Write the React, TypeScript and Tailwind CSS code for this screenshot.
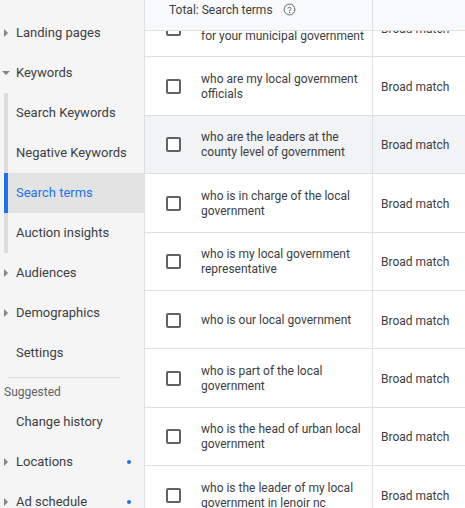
import React from "react";

type NavItem = {
  label: string;
  arrow?: "right" | "down";
  active?: boolean;
  dot?: boolean;
};

const navTop: NavItem[] = [
  { label: "Landing pages", arrow: "right" },
  { label: "Keywords", arrow: "down" },
];

const navSub: NavItem[] = [
  { label: "Search Keywords" },
  { label: "Negative Keywords" },
  { label: "Search terms", active: true },
  { label: "Auction insights" },
];

const navBottom: NavItem[] = [
  { label: "Audiences", arrow: "right" },
  { label: "Demographics", arrow: "right" },
  { label: "Settings" },
];

const suggested: NavItem[] = [
  { label: "Change history" },
  { label: "Locations", arrow: "right", dot: true },
  { label: "Ad schedule", arrow: "right", dot: true },
];

const rows: { term: string[]; hover?: boolean }[] = [
  { term: ["who is the representative", "for your municipal government"] },
  { term: ["who are my local government", "officials"] },
  { term: ["who are the leaders at the", "county level of government"], hover: true },
  { term: ["who is in charge of the local", "government"] },
  { term: ["who is my local government", "representative"] },
  { term: ["who is our local government"] },
  { term: ["who is part of the local", "government"] },
  { term: ["who is the head of urban local", "government"] },
  { term: ["who is the leader of my local", "government in lenoir nc"] },
];

const Arrow = ({ dir }: { dir: "right" | "down" }) =>
  dir === "right" ? (
    <svg width="4" height="8" viewBox="0 0 4 8" className="absolute left-[4px] top-1/2 -translate-y-1/2">
      <path d="M0 0 L4 4 L0 8 Z" fill="#80868b" />
    </svg>
  ) : (
    <svg width="8" height="4" viewBox="0 0 8 4" className="absolute left-[2px] top-1/2 -translate-y-1/2">
      <path d="M0 0 L8 0 L4 4 Z" fill="#80868b" />
    </svg>
  );

const NavRow = ({ item }: { item: NavItem }) => (
  <div className="relative flex h-10 items-center pl-4 pr-3 text-[13px] text-[#3c4043]">
    {item.arrow && <Arrow dir={item.arrow} />}
    <span className="flex-1 whitespace-nowrap">{item.label}</span>
    {item.dot && <span className="mr-[1px] h-[4px] w-[4px] rounded-full bg-[#1a73e8]" />}
  </div>
);

const SubRow = ({ item }: { item: NavItem }) => (
  <div className="flex h-10 pl-[4px]">
    <div className={`w-[4px] ${item.active ? "bg-[#1a73e8]" : "bg-[#dadce0]"}`} />
    <div
      className={`flex flex-1 items-center whitespace-nowrap pl-[8px] text-[13px] ${
        item.active ? "bg-[#e3e3e3] text-[#1a73e8]" : "text-[#3c4043]"
      }`}
    >
      {item.label}
    </div>
  </div>
);

const Checkbox = () => (
  <div className="h-[15px] w-[15px] rounded-[2px] border-2 border-[#5f6368] bg-white" />
);

export default function App() {
  return (
    <div
      className="flex h-[508px] w-[465px] overflow-hidden bg-white"
      style={{ fontFamily: "Roboto, 'Liberation Sans', sans-serif" }}
    >
      {/* Sidebar */}
      <div className="w-[145px] shrink-0 border-r border-[#e0e0e0] bg-[#f5f5f5] pt-[13px]">
        {navTop.map((n) => (
          <NavRow key={n.label} item={n} />
        ))}
        {navSub.map((n) => (
          <SubRow key={n.label} item={n} />
        ))}
        {navBottom.map((n) => (
          <NavRow key={n.label} item={n} />
        ))}
        <div className="ml-[8px] mr-[24px] mt-[4px] border-t border-[#dadce0]" />
        <div className="h-[24px] pl-[4px] pt-[7px] text-[12px] leading-[14px] text-[#5f6368]">
          Suggested
        </div>
        {suggested.map((n) => (
          <NavRow key={n.label} item={n} />
        ))}
      </div>

      {/* Table */}
      <div className="flex-1 text-[12px] text-[#3c4043]">
        <div className="relative z-10 flex h-[31px] border-b border-[#e0e0e0] bg-[#f8f9fa]">
          <div className="flex w-[228px] items-start gap-[10px] border-r border-[#e0e0e0] pl-[24px] pt-[3px]">
            <span className="leading-[14px]">Total: Search terms</span>
            <svg width="13" height="13" viewBox="0 0 24 24">
              <circle cx="12" cy="12" r="10" fill="none" stroke="#5f6368" strokeWidth="1.8" />
              <path
                d="M9.3 9.4a2.8 2.8 0 0 1 5.4 1c0 1.9-2.7 2.3-2.7 4"
                fill="none"
                stroke="#5f6368"
                strokeWidth="1.8"
                strokeLinecap="round"
              />
              <circle cx="12" cy="17.4" r="1.1" fill="#5f6368" />
            </svg>
          </div>
          <div className="flex-1" />
        </div>
        <div className="-mt-[32px]">
          {rows.map((r, i) => (
            <div
              key={i}
              className={`flex h-[58.4px] border-b border-[#e0e0e0] ${r.hover ? "bg-[#f1f3f4]" : ""}`}
            >
              <div className="flex w-[228px] items-center border-r border-[#e0e0e0]">
                <div className="w-[56px] shrink-0 pl-[21px] pt-[1px]">
                  <Checkbox />
                </div>
                <div className="whitespace-nowrap pt-[2px] leading-[15px]">
                  {r.term.map((t) => (
                    <div key={t}>{t}</div>
                  ))}
                </div>
              </div>
              <div className="flex flex-1 items-center whitespace-nowrap pl-[8px] pt-[2px]">
                Broad match
              </div>
            </div>
          ))}
        </div>
      </div>
    </div>
  );
}
